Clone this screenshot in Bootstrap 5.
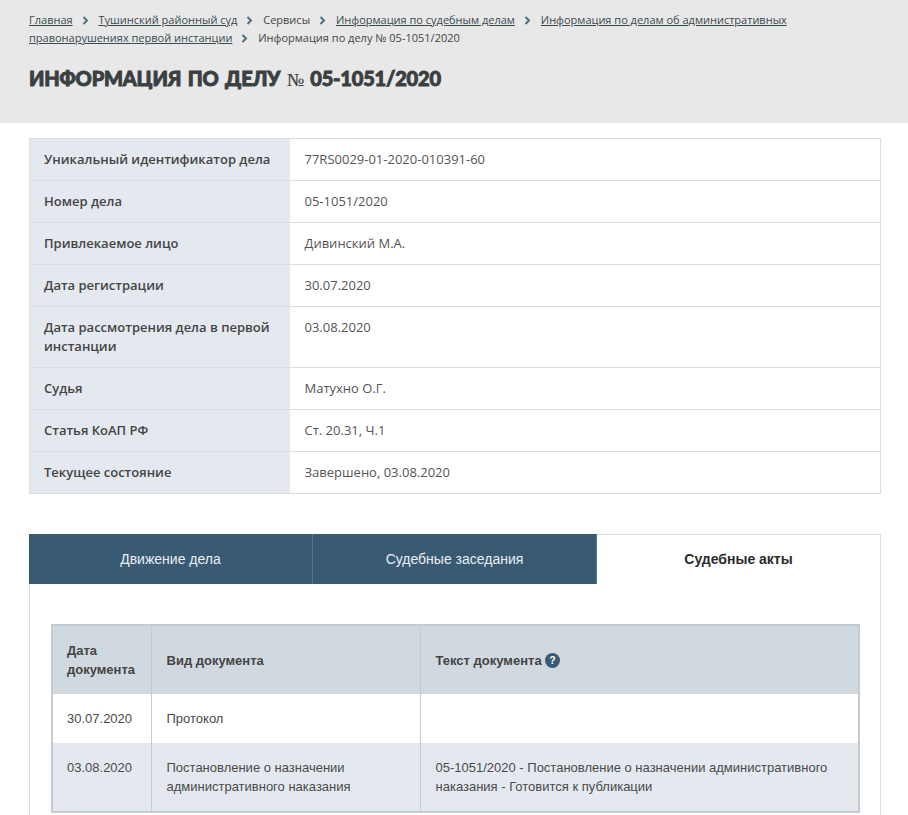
<!DOCTYPE html>
<html lang="ru">
<head>
<meta charset="utf-8">
<title>Информация по делу</title>
<link href="https://cdn.jsdelivr.net/npm/bootstrap@5.3.0/dist/css/bootstrap.min.css" rel="stylesheet">
<style>
html,body{height:815px;overflow:hidden}
body{background:#fff;font-family:"Open Sans",sans-serif;color:#3c3c3c}
.top-band{background:#e8e8e8;height:123px;padding:11px 29px 0}
.crumbs{font-size:11px;line-height:18px;color:#444;margin:0;padding:0;list-style:none}
.crumbs li{display:inline}
.crumbs a{color:#3a4a52;text-decoration:underline}
.crumb-sep{display:inline-block;width:7px;height:9px;margin:0 7px 0 9px;vertical-align:-1px}
.case-title{font-family:Lato,sans-serif;font-weight:900;font-size:20px;line-height:26px;letter-spacing:-.2px;word-spacing:2px;color:#3a3f42;text-transform:uppercase;margin:18px 0 0;-webkit-text-stroke:.9px #3a3f42}
.case-title span{font-family:"Liberation Serif",serif;font-weight:400;font-size:18px;-webkit-text-stroke:.2px #3a3f42}
.page-main{padding:15px 27px 0 29px}
.info-tbl{width:852px;table-layout:fixed;border-collapse:collapse;margin:0;font-size:13px;line-height:19px;border:1px solid #dcdfe2}
.info-tbl th,.info-tbl td{padding:11px 15px;border-top:1px solid #dcdfe2;vertical-align:top;color:#555;background:#fff;box-shadow:none}
.info-tbl th{width:260px;padding-left:14px;background:#e4e9f0;font-weight:600;color:#444}
.tab-box{margin-top:40px;width:852px;border:1px solid #e0e0e0;border-bottom:0;height:300px}
.tab-strip{margin:-1px 0 0 -1px;height:50px;font-family:"Liberation Sans",sans-serif;font-size:14px}
.tab-item{flex:1 1 0;display:flex;align-items:center;justify-content:center;background:#395a73;color:#e9eef2;border-right:1px solid #58758a}
.tab-item.is-on{background:#fff;color:#2b2b2b;font-weight:700;border-right:0;border-top:1px solid #e0e0e0}
.tab-strip .tab-item:nth-child(1){flex:0 0 284px}
.tab-strip .tab-item:nth-child(2){flex:0 0 284px}
.tab-body{padding:40px 21px 0}
.doc-tbl{width:809px;table-layout:fixed;border-collapse:collapse;margin:0;font-family:"Liberation Sans",sans-serif;font-size:13px;line-height:19px;border:2px solid #c3ccd5}
.doc-tbl th,.doc-tbl td{padding:15px;vertical-align:top;border:0;border-left:1px solid #c3ccd5;color:#4a4a4a;background:#fff;box-shadow:none}
.doc-tbl th{background:#d1d9e0;vertical-align:middle;font-weight:700;color:#444}
.doc-tbl tr.alt td{background:#e4e9f0}
.doc-tbl tr>*:first-child{padding-left:14px}
.help-dot{display:inline-block;width:15px;height:15px;vertical-align:-3px;margin-left:0}
</style>
</head>
<body>
<div class="top-band">
  <ul class="crumbs">
    <li><a href="#">Главная</a><svg class="crumb-sep" viewBox="0 0 7 9"><path d="M1.5 1l3.5 3.5L1.5 8" fill="none" stroke="#4c7082" stroke-width="2"/></svg></li>
    <li><a href="#">Тушинский районный суд</a><svg class="crumb-sep" viewBox="0 0 7 9"><path d="M1.5 1l3.5 3.5L1.5 8" fill="none" stroke="#4c7082" stroke-width="2"/></svg></li>
    <li>Сервисы<svg class="crumb-sep" viewBox="0 0 7 9"><path d="M1.5 1l3.5 3.5L1.5 8" fill="none" stroke="#4c7082" stroke-width="2"/></svg></li>
    <li><a href="#">Информация по судебным делам</a><svg class="crumb-sep" viewBox="0 0 7 9"><path d="M1.5 1l3.5 3.5L1.5 8" fill="none" stroke="#4c7082" stroke-width="2"/></svg></li>
    <li><a href="#">Информация по делам об административных</a></li>
    <li><a href="#">правонарушениях первой инстанции</a><svg class="crumb-sep" viewBox="0 0 7 9"><path d="M1.5 1l3.5 3.5L1.5 8" fill="none" stroke="#4c7082" stroke-width="2"/></svg></li>
    <li>Информация по делу № 05-1051/2020</li>
  </ul>
  <h1 class="case-title">Информация по делу <span>№</span> 05-1051/2020</h1>
</div>
<div class="page-main">
  <table class="table info-tbl">
    <tbody>
      <tr><th>Уникальный идентификатор дела</th><td>77RS0029-01-2020-010391-60</td></tr>
      <tr><th>Номер дела</th><td>05-1051/2020</td></tr>
      <tr><th>Привлекаемое лицо</th><td>Дивинский М.А.</td></tr>
      <tr><th>Дата регистрации</th><td>30.07.2020</td></tr>
      <tr><th>Дата рассмотрения дела в первой инстанции</th><td>03.08.2020</td></tr>
      <tr><th>Судья</th><td>Матухно О.Г.</td></tr>
      <tr><th>Статья КоАП РФ</th><td>Ст. 20.31, Ч.1</td></tr>
      <tr><th>Текущее состояние</th><td>Завершено, 03.08.2020</td></tr>
    </tbody>
  </table>
  <div class="tab-box">
    <div class="tab-strip d-flex">
      <div class="tab-item">Движение дела</div>
      <div class="tab-item">Судебные заседания</div>
      <div class="tab-item is-on">Судебные акты</div>
    </div>
    <div class="tab-body">
      <table class="table doc-tbl">
        <colgroup><col style="width:99px"><col style="width:269px"><col></colgroup>
        <thead>
          <tr><th>Дата документа</th><th>Вид документа</th><th>Текст документа <svg class="help-dot" viewBox="0 0 15 15"><circle cx="7.5" cy="7.5" r="7.5" fill="#395a73"/><text x="7.5" y="11.2" text-anchor="middle" font-family="Liberation Sans" font-weight="700" font-size="10.5" fill="#fff">?</text></svg></th></tr>
        </thead>
        <tbody>
          <tr><td>30.07.2020</td><td>Протокол</td><td></td></tr>
          <tr class="alt"><td>03.08.2020</td><td>Постановление о назначении административного наказания</td><td>05-1051/2020 - Постановление о назначении административного наказания - Готовится к публикации</td></tr>
        </tbody>
      </table>
    </div>
  </div>
</div>
<script src="https://cdn.jsdelivr.net/npm/bootstrap@5.3.0/dist/js/bootstrap.bundle.min.js"></script>
</body>
</html>
